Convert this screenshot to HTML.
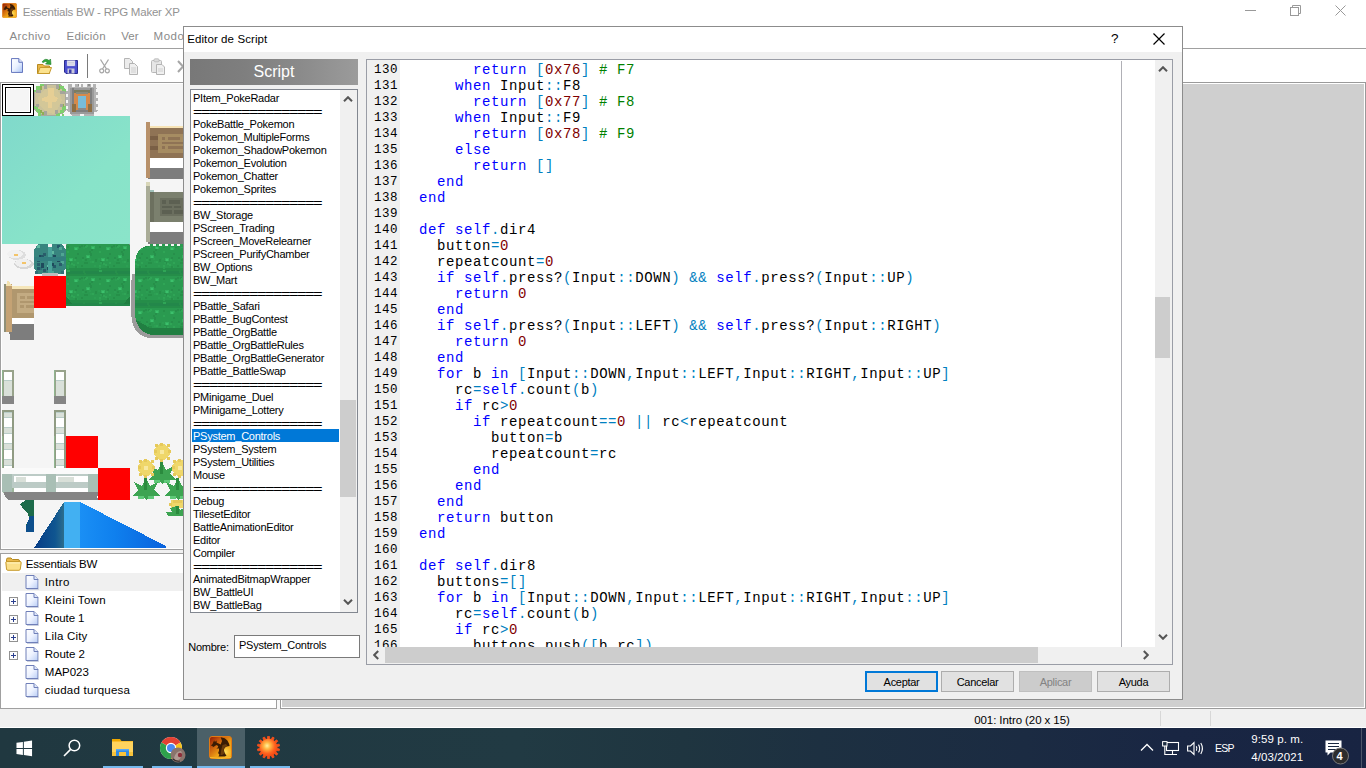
<!DOCTYPE html>
<html lang="es"><head><meta charset="utf-8"><title>Essentials BW - RPG Maker XP</title>
<style>
*{margin:0;padding:0;box-sizing:border-box}
html,body{width:1366px;height:768px;overflow:hidden;background:#fff}
body{position:relative;font-family:"Liberation Sans",sans-serif;font-size:12px;color:#000}
.a{position:absolute}
.t{position:absolute;white-space:pre;line-height:1}
#dlg{position:absolute;left:183px;top:26px;width:1000px;height:674px;background:#f0f0f0;border:1px solid #8c8c8c}
#dtitle{position:absolute;left:0;top:0;width:998px;height:25px;background:#fff}
.li{position:absolute;left:2px;white-space:pre;font-size:11px;line-height:13px;height:13px;letter-spacing:-0.25px;margin-top:1px}
.sep{font-size:10px;letter-spacing:-0.98px;transform:scaleX(1.646);transform-origin:0 0;margin-top:1.5px}
.ln{position:absolute;left:7px;font-family:"Liberation Mono",monospace;font-size:12.5px;letter-spacing:0.5px;line-height:16px;height:16px;white-space:pre;color:#000}
.cl{position:absolute;left:34px;font-family:"Liberation Mono",monospace;font-size:14px;letter-spacing:0.6px;line-height:16px;height:16px;white-space:pre;color:#000}
.k{color:#0000ff}.s{color:#0080c0}.n{color:#800000}.c{color:#008000}
.btn{position:absolute;top:645px;width:73px;height:21px;background:#e1e1e1;border:1px solid #adadad;font-size:11px;text-align:center;line-height:21px;letter-spacing:-0.3px}
.tr{position:absolute;white-space:pre;font-size:12px;line-height:18px;height:18px}
</style></head>
<body>
<div class="a" id="main" style="left:0;top:0;width:1366px;height:728px;background:#fff">
<div class="t" id="f1" style="left:22.8px;top:4.02px;font-size:11.5px;line-height:16px;color:#939393;letter-spacing:-0.22px;">Essentials BW - RPG Maker XP</div>
<div class="t" id="f2" style="left:9.5px;top:28.02px;font-size:11.5px;line-height:16px;color:#8a8a8a;letter-spacing:0.38px;">Archivo</div>
<div class="t" id="f3" style="left:66.5px;top:28.02px;font-size:11.5px;line-height:16px;color:#8a8a8a;letter-spacing:0.23px;">Edición</div>
<div class="t" id="f4" style="left:121.2px;top:28.02px;font-size:11.5px;line-height:16px;color:#8a8a8a;letter-spacing:0.01px;">Ver</div>
<div class="t" id="f5" style="left:153.5px;top:28.02px;font-size:11.5px;line-height:16px;color:#8a8a8a;letter-spacing:0.55px;">Modo</div>
<div class="a" style="left:0;top:48px;width:1366px;height:1px;background:#a0a0a0"></div>
<div class="a" style="left:0;top:82px;width:1366px;height:1px;background:#a0a0a0"></div>
<svg class="a" style="left:2px;top:3px" width="15" height="15" viewBox="0 0 23 23"><defs><linearGradient id="rmb" x1="0" y1="0" x2="1" y2="1"><stop offset="0" stop-color="#8c1606"/><stop offset="0.3" stop-color="#c85a0c"/><stop offset="0.6" stop-color="#eea016"/><stop offset="1" stop-color="#f5b422"/></linearGradient><radialGradient id="rfb" cx="0.72" cy="0.7" r="0.3"><stop offset="0" stop-color="#ffe060"/><stop offset="1" stop-color="#ffd040" stop-opacity="0"/></radialGradient></defs><rect x="0.5" y="0.5" width="22" height="22" rx="2.5" fill="url(#rmb)" stroke="#e07a14"/><rect x="0.5" y="0.5" width="22" height="22" rx="2.5" fill="url(#rfb)"/><path d="M1.8 9.5L3.5 8L5.1 4.2L5.9 6L7.5 4.4L7.7 6.8L9.6 7.5L11.7 8.6L13 5.1L11.7 1.3L15.7 2.2L18.4 4.6L20.1 7.7L20.6 10L17.5 10.4L15.7 11.7L14.8 13.9L15.7 17L17.5 19.7L15.7 20.6H9.5L10.4 18.8L9.1 17L10 14.8V12.6L7.3 12.4L8.8 11.4L9.2 10L7.2 8.9L6 9.9L3.8 11.3L3.6 9.9Z" fill="#3a1c04"/><path d="M13.5 9L17 8L18.5 10L15.5 11.5L14.5 14L15.5 17.5L13 19H11.5L12 15Z" fill="#6a3c0c"/><path d="M1 21.5Q11.5 23.5 22 21.5" stroke="#f7c030" stroke-width="1" fill="none"/></svg>
<div class="a" style="left:1245px;top:10px;width:11px;height:1px;background:#999"></div>
<svg class="a" style="left:1290px;top:5px" width="11" height="11" viewBox="0 0 11 11"><path d="M2.5 2.5V0.5H10.5V8.5H8.5" fill="none" stroke="#999"/><rect x="0.5" y="2.5" width="8" height="8" fill="none" stroke="#999"/></svg>
<svg class="a" style="left:1335px;top:5px" width="11" height="11" viewBox="0 0 11 11"><path d="M0.5 0.5L10.5 10.5M10.5 0.5L0.5 10.5" stroke="#999" stroke-width="1" fill="none"/></svg>
<svg class="a" style="left:11px;top:58px" width="12" height="15" viewBox="0 0 13 16"><defs><linearGradient id="ni" x1="0" y1="0" x2="1" y2="1"><stop offset="0" stop-color="#fff"/><stop offset="0.5" stop-color="#eaf1ff"/><stop offset="1" stop-color="#a9c4f5"/></linearGradient></defs><path d="M0.5 0.5H8.5L12.5 4.5V15.5H0.5Z" fill="url(#ni)" stroke="#5a6cb8"/><path d="M8.5 0.5V4.5H12.5" fill="#dfe8fb" stroke="#5a6cb8"/></svg>
<svg class="a" style="left:37px;top:57px" width="16" height="18" viewBox="0 0 16 18"><path d="M0.5 7.5H6L7.5 9H12.5V16.5H0.5Z" fill="#e8b648" stroke="#b88a20"/><path d="M0.8 16.5L3 10.5H14.5L12.3 16.5Z" fill="#fbe28e" stroke="#c79a2c"/><path d="M5 5Q8 0.5 12 3.5L13.5 2L14 7.5L8.5 7L10.3 5.2Q8 3.5 6.5 5.5Z" fill="#2fa83a" stroke="#1c7a26" stroke-width="0.6"/></svg>
<svg class="a" style="left:64px;top:60px" width="14" height="14" viewBox="0 0 14 14"><path d="M0.5 0.5H13.5V13.5H2L0.5 12Z" fill="#4a4ed0" stroke="#2a2c90"/><rect x="3" y="0.5" width="8" height="5.5" fill="#f4f4fa" stroke="#8a8cc8" stroke-width="0.5"/><path d="M4 2.2H10M4 4H10" stroke="#b0b0c8" stroke-width="0.8"/><rect x="3.5" y="8.5" width="7" height="5" fill="#c8c8dc"/><rect x="5" y="9.5" width="2.5" height="3.5" fill="#3a3ca8"/></svg>
<div class="a" style="left:87px;top:54px;width:1px;height:24px;background:#7a7a7a"></div>
<svg class="a" style="left:99px;top:59px" width="11" height="15" viewBox="0 0 11 15"><path d="M1.5 0.5L7.5 10M9.5 0.5L3.5 10" stroke="#a6a6a6" stroke-width="1.3" fill="none"/><circle cx="2.7" cy="11.8" r="2" fill="none" stroke="#a6a6a6" stroke-width="1.2"/><circle cx="8.3" cy="11.8" r="2" fill="none" stroke="#a6a6a6" stroke-width="1.2"/></svg>
<svg class="a" style="left:124px;top:58px" width="15" height="17" viewBox="0 0 15 17"><path d="M0.5 0.5H5.5L8.5 3.5V10.5H0.5Z" fill="#ececec" stroke="#b4b4b4"/><path d="M5.5 5.5H10.5L13.5 8.5V16.5H5.5Z" fill="#efefef" stroke="#b4b4b4"/><path d="M7 10H12M7 12H12M7 14H12" stroke="#c8c8c8" stroke-width="0.8"/></svg>
<svg class="a" style="left:151px;top:58px" width="15" height="17" viewBox="0 0 15 17"><rect x="0.5" y="2.5" width="10" height="12" rx="1" fill="#e6e6e6" stroke="#b8b8b8"/><rect x="3" y="0.8" width="5" height="3" rx="1" fill="#dcdcdc" stroke="#b8b8b8" stroke-width="0.8"/><path d="M5.5 6.5H11L13.5 9V16.5H5.5Z" fill="#f0f0f0" stroke="#b4b4b4"/><path d="M7 11H12M7 13H12" stroke="#c8c8c8" stroke-width="0.8"/></svg>
<svg class="a" style="left:177px;top:60px" width="12" height="13" viewBox="0 0 12 13"><path d="M1 1L11 12M11 1L1 12" stroke="#a6a6a6" stroke-width="2" fill="none"/></svg>
<div class="a" style="left:0;top:83px;width:282px;height:626px;background:#f0f0f0"></div>
<div class="a" id="tiles" style="left:0;top:82px;width:277px;height:468px;background:#f5f5f5;border:1px solid #a0a0a0;box-shadow:inset 1px 1px 0 #fff,inset -1px -1px 0 #fff;overflow:hidden"><div class="a" style="left:1px;top:1px"><svg class="a" style="left:0;top:0" width="274" height="464" viewBox="0 0 274 464" shape-rendering="crispEdges"><rect x="0" y="0" width="32" height="32" fill="#000"/><rect x="1" y="1" width="30" height="30" fill="#fff"/><rect x="3" y="3" width="26" height="26" fill="#000"/><rect x="4" y="4" width="24" height="24" fill="#fff"/><rect x="5" y="5" width="22" height="22" fill="#f5f5f5"/><polygon points="38,0 58,0 64,6 64,26 58,32 38,32 32,26 32,6" fill="#a9a99e"/><polygon points="40,1 56,1 63,8 63,24 56,31 40,31 33,24 33,8" fill="#cbc29b"/><polygon points="44,4 54,4 58,10 60,16 56,24 52,30 44,28 38,22 36,14 40,8" fill="#d3c798"/><polygon points="46,4 52,4 52,12 56,14 54,18 50,18 50,24 46,24 46,18 40,17 40,14 46,12" fill="#e6cf95"/><rect x="38" y="0" width="4" height="2" fill="#7fcf6e"/><rect x="34" y="2" width="4" height="4" fill="#7fcf6e"/><rect x="36" y="0" width="2" height="2" fill="#7fcf6e"/><rect x="56" y="0" width="2" height="2" fill="#7fcf6e"/><rect x="58" y="2" width="4" height="3" fill="#7fcf6e"/><rect x="60" y="5" width="4" height="3" fill="#7fcf6e"/><rect x="32" y="6" width="2" height="2" fill="#7fcf6e"/><rect x="32" y="22" width="4" height="3" fill="#7fcf6e"/><rect x="34" y="25" width="4" height="3" fill="#7fcf6e"/><rect x="36" y="28" width="3" height="4" fill="#7fcf6e"/><rect x="60" y="22" width="4" height="4" fill="#7fcf6e"/><rect x="58" y="26" width="4" height="3" fill="#7fcf6e"/><rect x="54" y="29" width="5" height="3" fill="#7fcf6e"/><rect x="60" y="30" width="2" height="2" fill="#7fcf6e"/><rect x="38" y="2" width="2" height="4" fill="#8fae55"/><rect x="56" y="2" width="2" height="4" fill="#8fae55"/><rect x="40" y="28" width="2" height="3" fill="#8fae55"/><rect x="60" y="20" width="2" height="3" fill="#8fae55"/><rect x="38" y="26" width="2" height="3" fill="#8fae55"/><rect x="42" y="0" width="3" height="5" fill="#a5a59b"/><rect x="54" y="0" width="3" height="5" fill="#a5a59b"/><rect x="34" y="6" width="5" height="3" fill="#a5a59b"/><rect x="58" y="7" width="5" height="3" fill="#a5a59b"/><rect x="34" y="20" width="3" height="3" fill="#a5a59b"/><rect x="58" y="20" width="3" height="3" fill="#a5a59b"/><rect x="42" y="27" width="3" height="4" fill="#a5a59b"/><rect x="53" y="26" width="3" height="4" fill="#a5a59b"/><rect x="32" y="0" width="6" height="2" fill="#f5f5f5"/><rect x="32" y="0" width="2" height="6" fill="#f5f5f5"/><rect x="60" y="0" width="4" height="2" fill="#f5f5f5"/><rect x="32" y="28" width="3" height="4" fill="#f5f5f5"/><rect x="58" y="30" width="2" height="2" fill="#f5f5f5"/><polygon points="66,0 94,0 96,6 96,26 92,32 70,32 64,26 64,6" fill="#b3b3b3"/><rect x="71" y="0" width="2" height="3" fill="#f5f5f5"/><rect x="76" y="0" width="2" height="2" fill="#8e8e8e"/><rect x="81" y="0" width="2" height="3" fill="#f5f5f5"/><rect x="86" y="0" width="2" height="2" fill="#8e8e8e"/><rect x="70" y="0" width="2" height="3" fill="#f5f5f5"/><rect x="77" y="0" width="2" height="3" fill="#f5f5f5"/><rect x="83" y="0" width="2" height="3" fill="#f5f5f5"/><rect x="89" y="0" width="2" height="3" fill="#f5f5f5"/><rect x="64" y="4" width="2" height="3" fill="#f5f5f5"/><rect x="94" y="5" width="2" height="3" fill="#f5f5f5"/><rect x="64" y="10" width="2" height="3" fill="#f5f5f5"/><rect x="94" y="11" width="2" height="3" fill="#f5f5f5"/><rect x="64" y="16" width="2" height="3" fill="#f5f5f5"/><rect x="94" y="17" width="2" height="3" fill="#f5f5f5"/><rect x="64" y="22" width="2" height="3" fill="#f5f5f5"/><rect x="94" y="23" width="2" height="3" fill="#f5f5f5"/><rect x="64" y="0" width="2" height="4" fill="#f5f5f5"/><rect x="94" y="0" width="2" height="4" fill="#f5f5f5"/><rect x="64" y="28" width="4" height="4" fill="#f5f5f5"/><rect x="92" y="28" width="4" height="4" fill="#f5f5f5"/><rect x="78" y="30" width="4" height="2" fill="#f5f5f5"/><rect x="68" y="4" width="24" height="26" fill="#9a9a9a"/><rect x="70" y="4" width="2" height="24" fill="#7f7f7f"/><rect x="88" y="4" width="2" height="24" fill="#7f7f7f"/><rect x="72" y="8" width="16" height="20" fill="#d58a4b"/><rect x="72" y="6" width="16" height="3" fill="#7c7c62"/><rect x="74" y="8" width="12" height="2" fill="#8a8a7a"/><rect x="70" y="20" width="4" height="8" fill="#8c6f45"/><rect x="86" y="20" width="4" height="8" fill="#8c6f45"/><rect x="76" y="12" width="8" height="12" fill="#78bcd8"/><rect x="76" y="24" width="8" height="3" fill="#8a8a8a"/><rect x="74" y="26" width="12" height="2" fill="#7f7f7f"/><defs><linearGradient id="wg" x1="0" y1="0" x2="1" y2="1"><stop offset="0" stop-color="#80d9cb"/><stop offset="0.6" stop-color="#88e3c9"/><stop offset="1" stop-color="#8ae4c9"/></linearGradient></defs><rect x="0" y="32" width="128" height="128" fill="url(#wg)"/><rect x="148" y="74" width="33" height="10" fill="#ffffff"/><rect x="148" y="138" width="33" height="10" fill="#ffffff"/><rect x="10" y="234" width="22" height="6" fill="#ffffff"/><rect x="146" y="84" width="35" height="11" fill="#7d7d7d"/><rect x="144" y="38" width="4" height="56" fill="#b8916a"/><rect x="148" y="42" width="33" height="2" fill="#f7e3b5"/><rect x="148" y="44" width="33" height="30" fill="#8f7355"/><rect x="148" y="52" width="8" height="4" fill="#7a5f45"/><rect x="148" y="62" width="8" height="4" fill="#7a5f45"/><rect x="156" y="50" width="25" height="19" fill="#a68c62"/><rect x="160" y="53" width="3" height="3" fill="#8f7355"/><rect x="166" y="53" width="12" height="3" fill="#8f7355"/><rect x="160" y="58" width="21" height="2" fill="#8f7355"/><rect x="160" y="62" width="3" height="3" fill="#8f7355"/><rect x="166" y="62" width="15" height="3" fill="#8f7355"/><rect x="146" y="148" width="35" height="12" fill="#7d7d7d"/><rect x="144" y="98" width="4" height="60" fill="#a9ac97"/><rect x="144" y="98" width="4" height="4" fill="#d8d6b8"/><rect x="148" y="106" width="4" height="2" fill="#9fc0b8"/><rect x="148" y="108" width="33" height="30" fill="#7b806e"/><rect x="148" y="108" width="4" height="30" fill="#6c705f"/><rect x="158" y="114" width="23" height="18" fill="#6b6f5f"/><rect x="160" y="116" width="4" height="4" fill="#5c6052"/><rect x="167" y="116" width="11" height="4" fill="#5c6052"/><rect x="160" y="122" width="10" height="2" fill="#5c6052"/><rect x="172" y="122" width="7" height="2" fill="#5c6052"/><rect x="160" y="126" width="10" height="4" fill="#5c6052"/><rect x="172" y="126" width="9" height="4" fill="#5c6052"/><ellipse cx="15" cy="171" rx="9" ry="5" fill="#dedede"/><ellipse cx="13" cy="170" rx="8" ry="4" fill="#f1f1f1"/><ellipse cx="22" cy="180" rx="10" ry="5" fill="#d6d6d6"/><ellipse cx="21" cy="179" rx="8" ry="4" fill="#efefef"/><rect x="12" y="170" width="4" height="2" fill="#f3c46a"/><rect x="20" y="178" width="4" height="2" fill="#f3c46a"/><polygon points="36,160 60,160 64,166 64,184 60,190 36,190 32,184 32,166" fill="#38857f"/><rect x="39" y="179" width="3" height="3" fill="#1f4a5c"/><rect x="37" y="171" width="3" height="3" fill="#1f4a5c"/><rect x="47" y="181" width="3" height="3" fill="#1f4a5c"/><rect x="35" y="179" width="3" height="3" fill="#2a5d6b"/><rect x="59" y="175" width="3" height="3" fill="#2f7078"/><rect x="49" y="167" width="3" height="3" fill="#5fb8a0"/><rect x="55" y="175" width="3" height="3" fill="#1f4a5c"/><rect x="59" y="177" width="3" height="3" fill="#4fa593"/><rect x="45" y="181" width="3" height="3" fill="#5fb8a0"/><rect x="39" y="181" width="3" height="3" fill="#5fb8a0"/><rect x="59" y="177" width="3" height="3" fill="#4fa593"/><rect x="55" y="161" width="3" height="3" fill="#245868"/><rect x="57" y="163" width="3" height="3" fill="#5fb8a0"/><rect x="57" y="179" width="3" height="3" fill="#2a5d6b"/><rect x="41" y="185" width="3" height="3" fill="#2a5d6b"/><rect x="59" y="187" width="3" height="3" fill="#2f7078"/><rect x="47" y="179" width="3" height="3" fill="#245868"/><rect x="45" y="183" width="3" height="3" fill="#4fa593"/><rect x="45" y="183" width="3" height="3" fill="#1f4a5c"/><rect x="47" y="165" width="3" height="3" fill="#2f7078"/><rect x="35" y="161" width="3" height="3" fill="#5fb8a0"/><rect x="47" y="167" width="3" height="3" fill="#2f7078"/><rect x="53" y="173" width="3" height="3" fill="#245868"/><rect x="59" y="169" width="3" height="3" fill="#4fa593"/><rect x="49" y="187" width="3" height="3" fill="#4fa593"/><rect x="51" y="171" width="3" height="3" fill="#1f4a5c"/><rect x="51" y="173" width="3" height="3" fill="#1f4a5c"/><rect x="39" y="171" width="3" height="3" fill="#245868"/><rect x="33" y="187" width="3" height="3" fill="#2f7078"/><rect x="51" y="181" width="3" height="3" fill="#245868"/><rect x="37" y="183" width="3" height="3" fill="#2f7078"/><rect x="49" y="179" width="3" height="3" fill="#1f4a5c"/><rect x="35" y="183" width="3" height="3" fill="#245868"/><rect x="39" y="181" width="3" height="3" fill="#1f4a5c"/><rect x="41" y="169" width="3" height="3" fill="#2a5d6b"/><rect x="35" y="175" width="3" height="3" fill="#245868"/><rect x="47" y="163" width="3" height="3" fill="#2f7078"/><rect x="57" y="163" width="3" height="3" fill="#4fa593"/><rect x="46" y="160" width="4" height="30" fill="#4aa39a"/><rect x="32" y="173" width="32" height="4" fill="#337f80"/><rect x="40" y="189" width="16" height="3" fill="#bdbdbd"/><rect x="46" y="160" width="4" height="3" fill="#f5f5f5"/><rect x="32" y="192" width="32" height="32" fill="#ff0000"/><rect x="64" y="352" width="32" height="32" fill="#ff0000"/><rect x="96" y="384" width="32" height="32" fill="#ff0000"/><defs><pattern id="bp" x="64" y="160" width="32" height="32" patternUnits="userSpaceOnUse"><rect width="32" height="32" fill="#2a9a50"/><rect y="24" width="32" height="8" fill="#258d49"/><rect y="27" width="32" height="3" fill="#23874a"/><rect x="10" y="4" width="2" height="2" fill="#269049"/><rect x="20" y="1" width="2" height="2" fill="#2fa556"/><rect x="26" y="17" width="2" height="2" fill="#2fa556"/><rect x="11" y="18" width="2" height="2" fill="#2fa556"/><rect x="29" y="16" width="2" height="2" fill="#278f4b"/><rect x="1" y="2" width="2" height="2" fill="#269049"/><rect x="13" y="2" width="2" height="2" fill="#278f4b"/><rect x="2" y="17" width="2" height="2" fill="#269049"/><rect x="1" y="26" width="2" height="2" fill="#2fa556"/><rect x="7" y="20" width="2" height="2" fill="#2fa556"/><rect x="18" y="18" width="2" height="2" fill="#269049"/><rect x="1" y="7" width="2" height="2" fill="#2fa556"/><rect x="17" y="27" width="2" height="2" fill="#278f4b"/><rect x="9" y="13" width="2" height="2" fill="#278f4b"/><rect x="17" y="3" width="2" height="2" fill="#2c9f53"/><rect x="17" y="26" width="2" height="2" fill="#278f4b"/><rect x="3" y="18" width="2" height="2" fill="#278f4b"/><rect x="11" y="3" width="2" height="2" fill="#2fa556"/><rect x="18" y="1" width="2" height="2" fill="#278f4b"/><rect x="15" y="21" width="2" height="2" fill="#269049"/><rect x="24" y="10" width="2" height="2" fill="#269049"/><rect x="18" y="29" width="2" height="2" fill="#269049"/><rect x="11" y="9" width="2" height="2" fill="#278f4b"/><rect x="25" y="5" width="2" height="2" fill="#278f4b"/><rect x="2" y="18" width="2" height="2" fill="#2c9f53"/><rect x="16" y="15" width="2" height="2" fill="#2c9f53"/><rect x="23" y="14" width="2" height="2" fill="#2c9f53"/><rect x="19" y="2" width="2" height="2" fill="#2fa556"/><rect x="16" y="13" width="2" height="2" fill="#278f4b"/><rect x="24" y="10" width="2" height="2" fill="#278f4b"/><rect x="29" y="15" width="2" height="2" fill="#269049"/><rect x="1" y="21" width="2" height="2" fill="#2fa556"/><rect x="24" y="17" width="2" height="2" fill="#2c9f53"/><rect x="10" y="22" width="2" height="2" fill="#2c9f53"/><rect x="19" y="15" width="2" height="2" fill="#269049"/><rect x="2" y="26" width="2" height="2" fill="#2fa556"/><rect x="8" y="15" width="2" height="2" fill="#2fa556"/><rect x="1" y="23" width="2" height="2" fill="#2c9f53"/><rect x="20" y="18" width="2" height="2" fill="#269049"/><rect x="9" y="22" width="2" height="2" fill="#269049"/><rect x="28" y="21" width="2" height="2" fill="#2c9f53"/><rect x="0" y="14" width="2" height="2" fill="#2c9f53"/><rect x="5" y="19" width="2" height="2" fill="#2fa556"/><rect x="15" y="1" width="2" height="2" fill="#278f4b"/><rect x="24" y="9" width="2" height="2" fill="#278f4b"/><rect x="23" y="7" width="2" height="2" fill="#269049"/><rect x="8" y="3" width="4" height="3" fill="#33b05f"/><rect x="9" y="4" width="2" height="2" fill="#3cc06c"/><rect x="3" y="14" width="4" height="3" fill="#33b05f"/><rect x="4" y="15" width="2" height="2" fill="#3cc06c"/><rect x="20" y="11" width="4" height="3" fill="#33b05f"/><rect x="21" y="12" width="2" height="2" fill="#3cc06c"/><rect x="25" y="2" width="4" height="3" fill="#33b05f"/><rect x="26" y="3" width="2" height="2" fill="#3cc06c"/></pattern></defs><rect x="64" y="160" width="64" height="62" fill="url(#bp)"/><polygon points="64,212 72,222 64,222" fill="#1f7d40"/><polygon points="128,212 120,222 128,222" fill="#1f7d40"/><rect x="64" y="220" width="64" height="2" fill="#23874a"/><rect x="64" y="160" width="1" height="1" fill="#888"/><rect x="127" y="160" width="1" height="1" fill="#888"/><path d="M130 190Q127 216 130 238Q135 254 150 254H182V190Z" fill="#9b9b9b"/><path d="M144 162H182V251H150Q136 249 133 232V178Q134 165 144 162Z" fill="url(#bp)"/><path d="M134 236Q137 249 150 251H182V244H148Z" fill="#217f42"/><rect x="148" y="160" width="3" height="3" fill="#2a9a50"/><rect x="154" y="160" width="3" height="3" fill="#2a9a50"/><rect x="160" y="160" width="3" height="3" fill="#2a9a50"/><rect x="166" y="160" width="3" height="3" fill="#2a9a50"/><rect x="172" y="160" width="3" height="3" fill="#2a9a50"/><rect x="178" y="160" width="3" height="3" fill="#2a9a50"/><rect x="8" y="240" width="24" height="16" fill="#7d7d7d"/><polygon points="6,246 10,256 16,256 6,240" fill="#7d7d7d"/><rect x="2" y="200" width="8" height="48" fill="#c4a274"/><rect x="2" y="200" width="2" height="48" fill="#8e8f78"/><polygon points="6,196 10,202 4,202" fill="#f3e2b0"/><rect x="10" y="202" width="22" height="3" fill="#f5e6ba"/><rect x="10" y="205" width="22" height="29" fill="#b0976e"/><rect x="15" y="209" width="17" height="20" fill="#c3ab82"/><rect x="18" y="212" width="5" height="3" fill="#b0976e"/><rect x="25" y="212" width="7" height="3" fill="#b0976e"/><rect x="18" y="217" width="14" height="2" fill="#b0976e"/><rect x="18" y="221" width="4" height="3" fill="#b0976e"/><rect x="24" y="221" width="8" height="3" fill="#b0976e"/><rect x="0" y="286" width="12" height="34" fill="#98a38b"/><rect x="2" y="288" width="8" height="9" fill="#ffffff"/><rect x="2" y="297" width="8" height="15" fill="#d9e0d9"/><rect x="2" y="296" width="8" height="1" fill="#b9cdc8"/><rect x="0" y="312" width="12" height="8" fill="#858585"/><rect x="0" y="286" width="1" height="26" fill="#8fb58f"/><rect x="52" y="286" width="12" height="34" fill="#98a38b"/><rect x="54" y="288" width="8" height="9" fill="#ffffff"/><rect x="54" y="297" width="8" height="15" fill="#d9e0d9"/><rect x="54" y="296" width="8" height="1" fill="#b9cdc8"/><rect x="52" y="312" width="12" height="8" fill="#858585"/><rect x="52" y="286" width="1" height="26" fill="#8fb58f"/><rect x="0" y="326" width="12" height="60" fill="#909b83"/><rect x="0" y="352" width="1" height="34" fill="#8fb58f"/><rect x="2" y="328" width="8" height="58" fill="#ffffff"/><rect x="2" y="328" width="8" height="6" fill="#d9e0d9"/><rect x="2" y="333" width="8" height="1" fill="#b9cdc8"/><rect x="2" y="328" width="8" height="1" fill="#b9cdc8"/><rect x="2" y="344" width="8" height="6" fill="#d9e0d9"/><rect x="2" y="349" width="8" height="1" fill="#b9cdc8"/><rect x="2" y="343" width="8" height="1" fill="#b9cdc8"/><rect x="2" y="360" width="8" height="6" fill="#d9e0d9"/><rect x="2" y="365" width="8" height="1" fill="#b9cdc8"/><rect x="2" y="359" width="8" height="1" fill="#b9cdc8"/><rect x="2" y="376" width="8" height="6" fill="#d9e0d9"/><rect x="2" y="381" width="8" height="1" fill="#b9cdc8"/><rect x="2" y="375" width="8" height="1" fill="#b9cdc8"/><rect x="52" y="326" width="12" height="60" fill="#909b83"/><rect x="52" y="352" width="1" height="34" fill="#8fb58f"/><rect x="54" y="328" width="8" height="58" fill="#ffffff"/><rect x="54" y="328" width="8" height="6" fill="#d9e0d9"/><rect x="54" y="333" width="8" height="1" fill="#b9cdc8"/><rect x="54" y="328" width="8" height="1" fill="#b9cdc8"/><rect x="54" y="344" width="8" height="6" fill="#d9e0d9"/><rect x="54" y="349" width="8" height="1" fill="#b9cdc8"/><rect x="54" y="343" width="8" height="1" fill="#b9cdc8"/><rect x="54" y="360" width="8" height="6" fill="#d9e0d9"/><rect x="54" y="365" width="8" height="1" fill="#b9cdc8"/><rect x="54" y="359" width="8" height="1" fill="#b9cdc8"/><rect x="54" y="376" width="8" height="6" fill="#d9e0d9"/><rect x="54" y="381" width="8" height="1" fill="#b9cdc8"/><rect x="54" y="375" width="8" height="1" fill="#b9cdc8"/><rect x="0" y="384" width="96" height="7" fill="#fafafa"/><rect x="1" y="390" width="95" height="18" fill="#bccbc6"/><rect x="1" y="404" width="95" height="5" fill="#9db69b"/><rect x="2" y="408" width="94" height="8" fill="#858585"/><polygon points="0,408 6,416 0,416" fill="#f5f5f5"/><rect x="12" y="392" width="32" height="6" fill="#ffffff"/><rect x="14" y="393" width="10" height="5" fill="#d9e0d9"/><rect x="54" y="392" width="32" height="6" fill="#ffffff"/><rect x="56" y="393" width="16" height="5" fill="#d9e0d9"/><rect x="12" y="404" width="32" height="4" fill="#ffffff"/><rect x="54" y="404" width="32" height="4" fill="#ffffff"/><rect x="0" y="390" width="10" height="18" fill="#a9bfb5"/><rect x="44" y="390" width="10" height="18" fill="#a9bfb5"/><rect x="86" y="390" width="10" height="18" fill="#a9bfb5"/><rect x="95" y="412" width="1" height="2" fill="#fff"/><polygon points="24,416 32,416 32,448 24,448 24,440 28,436 26,430 22,426 18,420" fill="#1d6b4a"/><polygon points="28,432 32,432 32,448 24,448 24,442" fill="#0d4f8c"/><defs><linearGradient id="rl" x1="0" y1="0" x2="1" y2="0"><stop offset="0" stop-color="#073c86"/><stop offset="0.7" stop-color="#0f5590"/><stop offset="1" stop-color="#2c6d8c"/></linearGradient><linearGradient id="rr" x1="0" y1="0" x2="1" y2="0"><stop offset="0" stop-color="#1a8ff5"/><stop offset="0.4" stop-color="#0f80ee"/><stop offset="1" stop-color="#0a62dc"/></linearGradient></defs><polygon points="62,418 62,464 32,464" fill="url(#rl)"/><rect x="62" y="418" width="16" height="46" fill="#42b0f2"/><polygon points="78,418 82,420 164,462 164,464 78,464" fill="url(#rr)"/><polygon points="160,378 164,386 172,382 168,390 174,396 164,396 160,400 156,396 146,396 152,390 148,382 156,386" fill="#3da452"/><rect x="158" y="378" width="3" height="12" fill="#2b8a3e"/><rect x="152" y="396" width="6" height="3" fill="#5fc978"/><rect x="162" y="396" width="6" height="3" fill="#5fc978"/><polygon points="144,394 148,402 156,398 152,406 158,412 148,412 144,416 140,412 130,412 136,406 132,398 140,402" fill="#3da452"/><rect x="142" y="394" width="3" height="12" fill="#2b8a3e"/><rect x="136" y="412" width="6" height="3" fill="#5fc978"/><rect x="146" y="412" width="6" height="3" fill="#5fc978"/><polygon points="176,394 180,402 188,398 184,406 190,412 180,412 176,416 172,412 162,412 168,406 164,398 172,402" fill="#3da452"/><rect x="174" y="394" width="3" height="12" fill="#2b8a3e"/><rect x="168" y="412" width="6" height="3" fill="#5fc978"/><rect x="178" y="412" width="6" height="3" fill="#5fc978"/><circle cx="160" cy="368" r="8" fill="#efd76a"/><rect x="152" y="366" width="3" height="3" fill="#e6c95a"/><rect x="166" y="366" width="3" height="3" fill="#e6c95a"/><rect x="158" y="359" width="3" height="3" fill="#e6c95a"/><rect x="158" y="375" width="3" height="3" fill="#e6c95a"/><rect x="153" y="360" width="3" height="3" fill="#e6c95a"/><rect x="165" y="360" width="3" height="3" fill="#e6c95a"/><rect x="153" y="373" width="3" height="3" fill="#e6c95a"/><rect x="165" y="373" width="3" height="3" fill="#e6c95a"/><rect x="158" y="366" width="4" height="4" fill="#f8e9a0"/><circle cx="144" cy="384" r="8" fill="#efd76a"/><rect x="136" y="382" width="3" height="3" fill="#e6c95a"/><rect x="150" y="382" width="3" height="3" fill="#e6c95a"/><rect x="142" y="375" width="3" height="3" fill="#e6c95a"/><rect x="142" y="391" width="3" height="3" fill="#e6c95a"/><rect x="137" y="376" width="3" height="3" fill="#e6c95a"/><rect x="149" y="376" width="3" height="3" fill="#e6c95a"/><rect x="137" y="389" width="3" height="3" fill="#e6c95a"/><rect x="149" y="389" width="3" height="3" fill="#e6c95a"/><rect x="142" y="382" width="4" height="4" fill="#f8e9a0"/><circle cx="178" cy="384" r="8" fill="#efd76a"/><rect x="170" y="382" width="3" height="3" fill="#e6c95a"/><rect x="184" y="382" width="3" height="3" fill="#e6c95a"/><rect x="176" y="375" width="3" height="3" fill="#e6c95a"/><rect x="176" y="391" width="3" height="3" fill="#e6c95a"/><rect x="171" y="376" width="3" height="3" fill="#e6c95a"/><rect x="183" y="376" width="3" height="3" fill="#e6c95a"/><rect x="171" y="389" width="3" height="3" fill="#e6c95a"/><rect x="183" y="389" width="3" height="3" fill="#e6c95a"/><rect x="176" y="382" width="4" height="4" fill="#f8e9a0"/><rect x="169" y="416" width="13" height="8" fill="#efd76a"/><rect x="171" y="416" width="9" height="3" fill="#e6c95a"/><rect x="167" y="419" width="3" height="3" fill="#e6c95a"/><polygon points="174,422 178,426 182,424 182,432 166,432 164,428 170,428 168,424" fill="#3da452"/><rect x="174" y="422" width="3" height="8" fill="#2b8a3e"/></svg></div></div>
<div class="a" id="tree" style="left:0;top:553px;width:277px;height:156px;background:#fff;border:1px solid #a0a0a0;overflow:hidden"><div class="a" style="left:1px;top:0">
<svg class="a" style="left:3px;top:3px" width="17" height="14" viewBox="0 0 17 14"><path d="M1.5 2.5Q1.5 1 3 1H6L7.5 2.5H13Q14.5 2.5 14.5 4V5H1.5Z" fill="#e9b84a" stroke="#b58a22" stroke-width="1"/><path d="M0.8 5.2Q1 4.5 2 4.5H15Q16.3 4.5 16.2 5.8L15.3 12Q15.1 13.3 14 13.3H2.8Q1.6 13.3 1.5 12Z" fill="#fbe08a" stroke="#c79a2c" stroke-width="1"/><path d="M2 6H15" stroke="#fff3c0" stroke-width="1"/></svg>
<div class="t" id="f6" style="left:23.8px;top:2.02px;font-size:11.5px;line-height:16px;color:#000;letter-spacing:-0.21px;">Essentials BW</div>
<div class="a" style="left:0;top:19px;width:181px;height:18px;background:#f0f0f0"></div>
<svg class="a" style="left:23px;top:21px" width="14" height="15" viewBox="0 0 14 15"><defs><linearGradient id="pg0" x1="0" y1="0" x2="1" y2="1"><stop offset="0" stop-color="#ffffff"/><stop offset="0.5" stop-color="#eef3ff"/><stop offset="1" stop-color="#b9cdf5"/></linearGradient></defs><path d="M1 0.5H9L13 4.5V13.5H1Z" fill="url(#pg0)" stroke="#6f7fb8" stroke-width="1"/><path d="M9 0.5V4.5H13" fill="#dfe8fb" stroke="#6f7fb8" stroke-width="1"/><path d="M2 14.5H13.5V5" stroke="#c9cfe0" stroke-width="1" fill="none"/></svg>
<div class="t" id="f7" style="left:42.8px;top:20.02px;font-size:11.5px;line-height:16px;color:#000;letter-spacing:0.38px;">Intro</div>
<svg class="a" style="left:23px;top:39px" width="14" height="15" viewBox="0 0 14 15"><defs><linearGradient id="pg1" x1="0" y1="0" x2="1" y2="1"><stop offset="0" stop-color="#ffffff"/><stop offset="0.5" stop-color="#eef3ff"/><stop offset="1" stop-color="#b9cdf5"/></linearGradient></defs><path d="M1 0.5H9L13 4.5V13.5H1Z" fill="url(#pg1)" stroke="#6f7fb8" stroke-width="1"/><path d="M9 0.5V4.5H13" fill="#dfe8fb" stroke="#6f7fb8" stroke-width="1"/><path d="M2 14.5H13.5V5" stroke="#c9cfe0" stroke-width="1" fill="none"/></svg>
<svg class="a" style="left:7px;top:43px" width="9" height="9" viewBox="0 0 9 9"><rect x="0.5" y="0.5" width="8" height="8" fill="#fdfdfd" stroke="#919191"/><path d="M2 4.5H7M4.5 2V7" stroke="#2b3f8f" stroke-width="1"/></svg>
<div class="t" id="f8" style="left:42.8px;top:38.02px;font-size:11.5px;line-height:16px;color:#000;letter-spacing:0.28px;">Kleini Town</div>
<svg class="a" style="left:23px;top:57px" width="14" height="15" viewBox="0 0 14 15"><defs><linearGradient id="pg2" x1="0" y1="0" x2="1" y2="1"><stop offset="0" stop-color="#ffffff"/><stop offset="0.5" stop-color="#eef3ff"/><stop offset="1" stop-color="#b9cdf5"/></linearGradient></defs><path d="M1 0.5H9L13 4.5V13.5H1Z" fill="url(#pg2)" stroke="#6f7fb8" stroke-width="1"/><path d="M9 0.5V4.5H13" fill="#dfe8fb" stroke="#6f7fb8" stroke-width="1"/><path d="M2 14.5H13.5V5" stroke="#c9cfe0" stroke-width="1" fill="none"/></svg>
<svg class="a" style="left:7px;top:61px" width="9" height="9" viewBox="0 0 9 9"><rect x="0.5" y="0.5" width="8" height="8" fill="#fdfdfd" stroke="#919191"/><path d="M2 4.5H7M4.5 2V7" stroke="#2b3f8f" stroke-width="1"/></svg>
<div class="t" id="f9" style="left:42.8px;top:56.02px;font-size:11.5px;line-height:16px;color:#000;letter-spacing:-0.11px;">Route 1</div>
<svg class="a" style="left:23px;top:75px" width="14" height="15" viewBox="0 0 14 15"><defs><linearGradient id="pg3" x1="0" y1="0" x2="1" y2="1"><stop offset="0" stop-color="#ffffff"/><stop offset="0.5" stop-color="#eef3ff"/><stop offset="1" stop-color="#b9cdf5"/></linearGradient></defs><path d="M1 0.5H9L13 4.5V13.5H1Z" fill="url(#pg3)" stroke="#6f7fb8" stroke-width="1"/><path d="M9 0.5V4.5H13" fill="#dfe8fb" stroke="#6f7fb8" stroke-width="1"/><path d="M2 14.5H13.5V5" stroke="#c9cfe0" stroke-width="1" fill="none"/></svg>
<svg class="a" style="left:7px;top:79px" width="9" height="9" viewBox="0 0 9 9"><rect x="0.5" y="0.5" width="8" height="8" fill="#fdfdfd" stroke="#919191"/><path d="M2 4.5H7M4.5 2V7" stroke="#2b3f8f" stroke-width="1"/></svg>
<div class="t" id="f10" style="left:42.8px;top:74.02px;font-size:11.5px;line-height:16px;color:#000;letter-spacing:0.20px;">Lila City</div>
<svg class="a" style="left:23px;top:93px" width="14" height="15" viewBox="0 0 14 15"><defs><linearGradient id="pg4" x1="0" y1="0" x2="1" y2="1"><stop offset="0" stop-color="#ffffff"/><stop offset="0.5" stop-color="#eef3ff"/><stop offset="1" stop-color="#b9cdf5"/></linearGradient></defs><path d="M1 0.5H9L13 4.5V13.5H1Z" fill="url(#pg4)" stroke="#6f7fb8" stroke-width="1"/><path d="M9 0.5V4.5H13" fill="#dfe8fb" stroke="#6f7fb8" stroke-width="1"/><path d="M2 14.5H13.5V5" stroke="#c9cfe0" stroke-width="1" fill="none"/></svg>
<svg class="a" style="left:7px;top:97px" width="9" height="9" viewBox="0 0 9 9"><rect x="0.5" y="0.5" width="8" height="8" fill="#fdfdfd" stroke="#919191"/><path d="M2 4.5H7M4.5 2V7" stroke="#2b3f8f" stroke-width="1"/></svg>
<div class="t" id="f11" style="left:42.8px;top:92.02px;font-size:11.5px;line-height:16px;color:#000;letter-spacing:-0.05px;">Route 2</div>
<svg class="a" style="left:23px;top:111px" width="14" height="15" viewBox="0 0 14 15"><defs><linearGradient id="pg5" x1="0" y1="0" x2="1" y2="1"><stop offset="0" stop-color="#ffffff"/><stop offset="0.5" stop-color="#eef3ff"/><stop offset="1" stop-color="#b9cdf5"/></linearGradient></defs><path d="M1 0.5H9L13 4.5V13.5H1Z" fill="url(#pg5)" stroke="#6f7fb8" stroke-width="1"/><path d="M9 0.5V4.5H13" fill="#dfe8fb" stroke="#6f7fb8" stroke-width="1"/><path d="M2 14.5H13.5V5" stroke="#c9cfe0" stroke-width="1" fill="none"/></svg>
<div class="t" id="f12" style="left:42.8px;top:110.02px;font-size:11.5px;line-height:16px;color:#000;letter-spacing:-0.00px;">MAP023</div>
<svg class="a" style="left:23px;top:129px" width="14" height="15" viewBox="0 0 14 15"><defs><linearGradient id="pg6" x1="0" y1="0" x2="1" y2="1"><stop offset="0" stop-color="#ffffff"/><stop offset="0.5" stop-color="#eef3ff"/><stop offset="1" stop-color="#b9cdf5"/></linearGradient></defs><path d="M1 0.5H9L13 4.5V13.5H1Z" fill="url(#pg6)" stroke="#6f7fb8" stroke-width="1"/><path d="M9 0.5V4.5H13" fill="#dfe8fb" stroke="#6f7fb8" stroke-width="1"/><path d="M2 14.5H13.5V5" stroke="#c9cfe0" stroke-width="1" fill="none"/></svg>
<div class="t" id="f13" style="left:42.8px;top:128.02px;font-size:11.5px;line-height:16px;color:#000;letter-spacing:0.24px;">ciudad turquesa</div>
</div></div>
<div class="a" style="left:277px;top:83px;width:3px;height:626px;background:#f8f8f8"></div>
<div class="a" id="map" style="left:280px;top:82px;width:1086px;height:627px;background:#cfcfcf;border:1px solid #9a9a9a;box-shadow:inset 1px 1px 0 #fff,inset -1px -1px 0 #fff"></div>
<div class="a" id="status" style="left:0;top:709px;width:1366px;height:19px;background:#f0f0f0;border-bottom:1px solid #fff"></div>
<div class="t" id="f14" style="left:974.2px;top:712.02px;font-size:11.5px;line-height:16px;color:#000;letter-spacing:-0.08px;">001: Intro (20 x 15)</div>
<div class="a" style="left:1160px;top:711px;width:1px;height:15px;background:#d7d7d7"></div>
<div class="a" style="left:1210px;top:711px;width:1px;height:15px;background:#d7d7d7"></div>
</div>
<div id="dlg">
<div id="dtitle"></div>
<div class="t" id="f15" style="left:3.2px;top:4.02px;font-size:11.5px;line-height:16px;color:#000;letter-spacing:0.10px;">Editor de Script</div>
<div class="t" style="left:927px;top:5px;font-size:13.5px;line-height:14px" id="qm">?</div>
<svg class="a" style="left:969px;top:6px" width="12" height="12" viewBox="0 0 12 12"><path d="M0.5 0.5L11.5 11.5M11.5 0.5L0.5 11.5" stroke="#000" stroke-width="1.2" fill="none"/></svg>
<div class="a" style="left:6px;top:32px;width:168px;height:26px;background:linear-gradient(90deg,#787878 0%,#7e7e7e 30%,#8a8a8a 65%,#9b9b9b 100%);color:#fff;text-align:center;font-size:16px;line-height:25px" id="sh">Script</div>
<div class="a" id="lb" style="left:6px;top:62px;width:168px;height:524px;background:#fff;border:1px solid #828790;overflow:hidden">
<div class="li" style="top:1px">PItem_PokeRadar</div>
<div class="li sep" style="top:14px">================</div>
<div class="li" style="top:27px">PokeBattle_Pokemon</div>
<div class="li" style="top:40px">Pokemon_MultipleForms</div>
<div class="li" style="top:53px">Pokemon_ShadowPokemon</div>
<div class="li" style="top:66px">Pokemon_Evolution</div>
<div class="li" style="top:79px">Pokemon_Chatter</div>
<div class="li" style="top:92px">Pokemon_Sprites</div>
<div class="li sep" style="top:105px">================</div>
<div class="li" style="top:118px">BW_Storage</div>
<div class="li" style="top:131px">PScreen_Trading</div>
<div class="li" style="top:144px">PScreen_MoveRelearner</div>
<div class="li" style="top:157px">PScreen_PurifyChamber</div>
<div class="li" style="top:170px">BW_Options</div>
<div class="li" style="top:183px">BW_Mart</div>
<div class="li sep" style="top:196px">================</div>
<div class="li" style="top:209px">PBattle_Safari</div>
<div class="li" style="top:222px">PBattle_BugContest</div>
<div class="li" style="top:235px">PBattle_OrgBattle</div>
<div class="li" style="top:248px">PBattle_OrgBattleRules</div>
<div class="li" style="top:261px">PBattle_OrgBattleGenerator</div>
<div class="li" style="top:274px">PBattle_BattleSwap</div>
<div class="li sep" style="top:287px">================</div>
<div class="li" style="top:300px">PMinigame_Duel</div>
<div class="li" style="top:313px">PMinigame_Lottery</div>
<div class="li sep" style="top:326px">================</div>
<div class="a" style="left:1px;top:339px;width:147px;height:13px;background:#0078d7"></div>
<div class="li" style="top:339px;color:#fff">PSystem_Controls</div>
<div class="li" style="top:352px">PSystem_System</div>
<div class="li" style="top:365px">PSystem_Utilities</div>
<div class="li" style="top:378px">Mouse</div>
<div class="li sep" style="top:391px">================</div>
<div class="li" style="top:404px">Debug</div>
<div class="li" style="top:417px">TilesetEditor</div>
<div class="li" style="top:430px">BattleAnimationEditor</div>
<div class="li" style="top:443px">Editor</div>
<div class="li" style="top:456px">Compiler</div>
<div class="li sep" style="top:469px">================</div>
<div class="li" style="top:482px">AnimatedBitmapWrapper</div>
<div class="li" style="top:495px">BW_BattleUI</div>
<div class="li" style="top:508px">BW_BattleBag</div>
<div class="a" style="left:149px;top:0;width:17px;height:522px;background:#f0f0f0"></div>
<div class="a" style="left:149px;top:310px;width:16px;height:97px;background:#cdcdcd"></div>
<svg class="a" style="left:152px;top:6px" width="10" height="6" viewBox="0 0 10 6"><path d="M1 5.2L5 1.2L9 5.2" stroke="#555" stroke-width="2" fill="none"/></svg>
<svg class="a" style="left:152px;top:509px" width="10" height="6" viewBox="0 0 10 6"><path d="M1 0.8L5 4.8L9 0.8" stroke="#555" stroke-width="2" fill="none"/></svg>
</div>
<div class="t" id="f16" style="left:4.2px;top:612.19px;font-size:11px;line-height:16px;color:#000;letter-spacing:-0.23px;">Nombre:</div>
<div class="a" style="left:50px;top:608px;width:126px;height:23px;background:#fff;border:1px solid #7a7a7a"></div>
<div class="t" id="f17" style="left:55.0px;top:610.19px;font-size:11px;line-height:16px;color:#000;letter-spacing:-0.24px;">PSystem_Controls</div>
<div class="a" id="ed" style="left:182px;top:32px;width:807px;height:606px;background:#fff;border:1px solid #9a9da6;overflow:hidden">
<div class="a" style="left:0;top:0;width:33px;height:587px;background:#f0f0f0"></div>
<div class="a" style="left:754px;top:1px;width:1px;height:586px;background:#b0b0b6"></div>
<div class="ln" style="top:2.4px">130</div>
<div class="cl" style="top:2.4px">        <span class="k">return</span> <span class="s">[</span><span class="n">0x76</span><span class="s">]</span> <span class="c"># F7</span></div>
<div class="ln" style="top:18.4px">131</div>
<div class="cl" style="top:18.4px">      <span class="k">when</span> Input<span class="s">::</span>F8</div>
<div class="ln" style="top:34.4px">132</div>
<div class="cl" style="top:34.4px">        <span class="k">return</span> <span class="s">[</span><span class="n">0x77</span><span class="s">]</span> <span class="c"># F8</span></div>
<div class="ln" style="top:50.4px">133</div>
<div class="cl" style="top:50.4px">      <span class="k">when</span> Input<span class="s">::</span>F9</div>
<div class="ln" style="top:66.4px">134</div>
<div class="cl" style="top:66.4px">        <span class="k">return</span> <span class="s">[</span><span class="n">0x78</span><span class="s">]</span> <span class="c"># F9</span></div>
<div class="ln" style="top:82.4px">135</div>
<div class="cl" style="top:82.4px">      <span class="k">else</span></div>
<div class="ln" style="top:98.4px">136</div>
<div class="cl" style="top:98.4px">        <span class="k">return</span> <span class="s">[</span><span class="s">]</span></div>
<div class="ln" style="top:114.4px">137</div>
<div class="cl" style="top:114.4px">    <span class="k">end</span></div>
<div class="ln" style="top:130.4px">138</div>
<div class="cl" style="top:130.4px">  <span class="k">end</span></div>
<div class="ln" style="top:146.4px">139</div>
<div class="ln" style="top:162.4px">140</div>
<div class="cl" style="top:162.4px">  <span class="k">def</span> <span class="k">self</span><span class="s">.</span>dir4</div>
<div class="ln" style="top:178.4px">141</div>
<div class="cl" style="top:178.4px">    button<span class="s">=</span><span class="n">0</span></div>
<div class="ln" style="top:194.4px">142</div>
<div class="cl" style="top:194.4px">    repeatcount<span class="s">=</span><span class="n">0</span></div>
<div class="ln" style="top:210.4px">143</div>
<div class="cl" style="top:210.4px">    <span class="k">if</span> <span class="k">self</span><span class="s">.</span>press?<span class="s">(</span>Input<span class="s">::</span>DOWN<span class="s">)</span> <span class="s">&amp;&amp;</span> <span class="k">self</span><span class="s">.</span>press?<span class="s">(</span>Input<span class="s">::</span>UP<span class="s">)</span></div>
<div class="ln" style="top:226.4px">144</div>
<div class="cl" style="top:226.4px">      <span class="k">return</span> <span class="n">0</span></div>
<div class="ln" style="top:242.4px">145</div>
<div class="cl" style="top:242.4px">    <span class="k">end</span></div>
<div class="ln" style="top:258.4px">146</div>
<div class="cl" style="top:258.4px">    <span class="k">if</span> <span class="k">self</span><span class="s">.</span>press?<span class="s">(</span>Input<span class="s">::</span>LEFT<span class="s">)</span> <span class="s">&amp;&amp;</span> <span class="k">self</span><span class="s">.</span>press?<span class="s">(</span>Input<span class="s">::</span>RIGHT<span class="s">)</span></div>
<div class="ln" style="top:274.4px">147</div>
<div class="cl" style="top:274.4px">      <span class="k">return</span> <span class="n">0</span></div>
<div class="ln" style="top:290.4px">148</div>
<div class="cl" style="top:290.4px">    <span class="k">end</span></div>
<div class="ln" style="top:306.4px">149</div>
<div class="cl" style="top:306.4px">    <span class="k">for</span> b <span class="k">in</span> <span class="s">[</span>Input<span class="s">::</span>DOWN<span class="s">,</span>Input<span class="s">::</span>LEFT<span class="s">,</span>Input<span class="s">::</span>RIGHT<span class="s">,</span>Input<span class="s">::</span>UP<span class="s">]</span></div>
<div class="ln" style="top:322.4px">150</div>
<div class="cl" style="top:322.4px">      rc<span class="s">=</span><span class="k">self</span><span class="s">.</span>count<span class="s">(</span>b<span class="s">)</span></div>
<div class="ln" style="top:338.4px">151</div>
<div class="cl" style="top:338.4px">      <span class="k">if</span> rc<span class="s">&gt;</span><span class="n">0</span></div>
<div class="ln" style="top:354.4px">152</div>
<div class="cl" style="top:354.4px">        <span class="k">if</span> repeatcount<span class="s">==</span><span class="n">0</span> <span class="s">||</span> rc<span class="s">&lt;</span>repeatcount</div>
<div class="ln" style="top:370.4px">153</div>
<div class="cl" style="top:370.4px">          button<span class="s">=</span>b</div>
<div class="ln" style="top:386.4px">154</div>
<div class="cl" style="top:386.4px">          repeatcount<span class="s">=</span>rc</div>
<div class="ln" style="top:402.4px">155</div>
<div class="cl" style="top:402.4px">        <span class="k">end</span></div>
<div class="ln" style="top:418.4px">156</div>
<div class="cl" style="top:418.4px">      <span class="k">end</span></div>
<div class="ln" style="top:434.4px">157</div>
<div class="cl" style="top:434.4px">    <span class="k">end</span></div>
<div class="ln" style="top:450.4px">158</div>
<div class="cl" style="top:450.4px">    <span class="k">return</span> button</div>
<div class="ln" style="top:466.4px">159</div>
<div class="cl" style="top:466.4px">  <span class="k">end</span></div>
<div class="ln" style="top:482.4px">160</div>
<div class="ln" style="top:498.4px">161</div>
<div class="cl" style="top:498.4px">  <span class="k">def</span> <span class="k">self</span><span class="s">.</span>dir8</div>
<div class="ln" style="top:514.4px">162</div>
<div class="cl" style="top:514.4px">    buttons<span class="s">=</span><span class="s">[</span><span class="s">]</span></div>
<div class="ln" style="top:530.4px">163</div>
<div class="cl" style="top:530.4px">    <span class="k">for</span> b <span class="k">in</span> <span class="s">[</span>Input<span class="s">::</span>DOWN<span class="s">,</span>Input<span class="s">::</span>LEFT<span class="s">,</span>Input<span class="s">::</span>RIGHT<span class="s">,</span>Input<span class="s">::</span>UP<span class="s">]</span></div>
<div class="ln" style="top:546.4px">164</div>
<div class="cl" style="top:546.4px">      rc<span class="s">=</span><span class="k">self</span><span class="s">.</span>count<span class="s">(</span>b<span class="s">)</span></div>
<div class="ln" style="top:562.4px">165</div>
<div class="cl" style="top:562.4px">      <span class="k">if</span> rc<span class="s">&gt;</span><span class="n">0</span></div>
<div class="ln" style="top:578.4px">166</div>
<div class="cl" style="top:578.4px">        buttons<span class="s">.</span>push<span class="s">(</span><span class="s">[</span>b<span class="s">,</span>rc<span class="s">]</span><span class="s">)</span></div>
<div class="a" style="left:788px;top:0;width:18px;height:604px;background:#f0f0f0"></div>
<div class="a" style="left:0;top:587px;width:805px;height:18px;background:#f0f0f0"></div>
<div class="a" style="left:788px;top:237px;width:15px;height:61px;background:#cdcdcd"></div>
<div class="a" style="left:18px;top:587px;width:653px;height:16px;background:#cdcdcd"></div>
<svg class="a" style="left:791px;top:6px" width="10" height="6" viewBox="0 0 10 6"><path d="M1 5.2L5 1.2L9 5.2" stroke="#555" stroke-width="2" fill="none"/></svg>
<svg class="a" style="left:791px;top:574px" width="10" height="6" viewBox="0 0 10 6"><path d="M1 0.8L5 4.8L9 0.8" stroke="#555" stroke-width="2" fill="none"/></svg>
<svg class="a" style="left:6px;top:590px" width="6" height="10" viewBox="0 0 6 10"><path d="M5.2 1L1.2 5L5.2 9" stroke="#555" stroke-width="2" fill="none"/></svg>
<svg class="a" style="left:776px;top:590px" width="6" height="10" viewBox="0 0 6 10"><path d="M0.8 1L4.8 5L0.8 9" stroke="#555" stroke-width="2" fill="none"/></svg>
</div>
<div class="btn" style="left:681px;top:644px;border:2px solid #0078d7;line-height:19px">Aceptar</div>
<div class="btn" style="left:757px;top:644px">Cancelar</div>
<div class="btn" style="left:835px;top:644px;background:#cccccc;border-color:#bfbfbf;color:#838383">Aplicar</div>
<div class="btn" style="left:913px;top:644px">Ayuda</div>
</div>
<div class="a" id="tb" style="left:0;top:728px;width:1366px;height:40px;background:linear-gradient(90deg,#203840 0%,#213a43 38%,#1f3540 50%,#1d3041 60%,#1b2b42 75%,#192643 86%,#182442 100%);overflow:hidden">
<div class="a" style="left:197px;top:0;width:48px;height:40px;background:#4b6068"></div>
<div class="a" style="left:103px;top:38px;width:40px;height:2px;background:#76b9ed"></div>
<div class="a" style="left:152px;top:38px;width:40px;height:2px;background:#76b9ed"></div>
<div class="a" style="left:197px;top:38px;width:48px;height:2px;background:#76b9ed"></div>
<div class="a" style="left:250px;top:38px;width:40px;height:2px;background:#76b9ed"></div>
<svg class="a" style="left:15.5px;top:11.5px" width="17" height="17" viewBox="0 0 18 18"><path d="M0.5 3L7.3 2V8.4H0.5ZM8.3 1.8L17 0.5V8.4H8.3ZM0.5 9.4H7.3V15.8L0.5 14.8ZM8.3 9.4H17V17.3L8.3 16Z" fill="#fff"/></svg>
<svg class="a" style="left:62px;top:10px" width="20" height="20" viewBox="0 0 20 20"><circle cx="12.4" cy="7.5" r="5.3" fill="none" stroke="#fff" stroke-width="1.5"/><path d="M8.6 11.4L2 18" stroke="#fff" stroke-width="1.6"/></svg>
<svg class="a" style="left:111px;top:10px" width="23" height="20" viewBox="0 0 23 20"><path d="M1 1H9L10.5 3H22V8H1Z" fill="#f0a800"/><rect x="1" y="3.5" width="21" height="14.5" fill="#ffd45e"/><path d="M1 14H22V18H1Z" fill="#f7c33a"/><path d="M5 18V11H18V18H15V14H8V18Z" fill="#2f8be6"/><rect x="5" y="11" width="13" height="1.5" fill="#5aa9f2"/></svg>
<svg class="a" style="left:159px;top:8px" width="28" height="28" viewBox="0 0 28 28"><circle cx="12" cy="12" r="11" fill="#fff"/><path d="M12 12L2.47 6.5A11 11 0 0 1 21.53 6.5Z" fill="#e34133"/><path d="M12 12L21.53 6.5A11 11 0 0 1 12 23Z" fill="#f6c21c"/><path d="M12 12L12 23A11 11 0 0 1 2.47 6.5Z" fill="#2ea24c"/><path d="M12 6.5H21.53" stroke="#e34133" stroke-width="0"/><circle cx="12" cy="12" r="5.2" fill="#fff"/><circle cx="12" cy="12" r="4" fill="#4a8af4"/><circle cx="19" cy="19" r="7.5" fill="#8a746c"/><path d="M15 22Q17 15 22 15Q24 18 22 21Q20 25 16 24Z" fill="#b09a92"/><circle cx="21" cy="19" r="2.2" fill="#8c2f3a"/><path d="M14 23Q17 26 21 25" stroke="#3a2e2a" stroke-width="1.2" fill="none"/></svg>
<svg class="a" style="left:209px;top:8px" width="23" height="23" viewBox="0 0 23 23"><defs><linearGradient id="rma" x1="0" y1="0" x2="1" y2="1"><stop offset="0" stop-color="#8c1606"/><stop offset="0.3" stop-color="#c85a0c"/><stop offset="0.6" stop-color="#eea016"/><stop offset="1" stop-color="#f5b422"/></linearGradient><radialGradient id="rfa" cx="0.72" cy="0.7" r="0.3"><stop offset="0" stop-color="#ffe060"/><stop offset="1" stop-color="#ffd040" stop-opacity="0"/></radialGradient></defs><rect x="0.5" y="0.5" width="22" height="22" rx="2.5" fill="url(#rma)" stroke="#e07a14"/><rect x="0.5" y="0.5" width="22" height="22" rx="2.5" fill="url(#rfa)"/><path d="M1.8 9.5L3.5 8L5.1 4.2L5.9 6L7.5 4.4L7.7 6.8L9.6 7.5L11.7 8.6L13 5.1L11.7 1.3L15.7 2.2L18.4 4.6L20.1 7.7L20.6 10L17.5 10.4L15.7 11.7L14.8 13.9L15.7 17L17.5 19.7L15.7 20.6H9.5L10.4 18.8L9.1 17L10 14.8V12.6L7.3 12.4L8.8 11.4L9.2 10L7.2 8.9L6 9.9L3.8 11.3L3.6 9.9Z" fill="#3a1c04"/><path d="M13.5 9L17 8L18.5 10L15.5 11.5L14.5 14L15.5 17.5L13 19H11.5L12 15Z" fill="#6a3c0c"/><path d="M1 21.5Q11.5 23.5 22 21.5" stroke="#f7c030" stroke-width="1" fill="none"/></svg>
<svg class="a" style="left:257px;top:8px" width="23" height="23" viewBox="0 0 23 23"><defs><radialGradient id="sg" cx="0.42" cy="0.4" r="0.62"><stop offset="0" stop-color="#fff2a0"/><stop offset="0.3" stop-color="#ffb844"/><stop offset="0.7" stop-color="#ff6420"/><stop offset="1" stop-color="#f24812"/></radialGradient></defs><polygon points="10.37,3.18 10.60,0.34 12.40,0.34 12.63,3.18 14.10,3.51 15.53,1.05 17.16,1.83 16.13,4.49 17.30,5.43 19.66,3.83 20.79,5.25 18.71,7.19 19.36,8.55 22.18,8.13 22.58,9.90 19.87,10.75 19.87,12.25 22.58,13.10 22.18,14.87 19.36,14.45 18.71,15.81 20.79,17.75 19.66,19.17 17.30,17.57 16.13,18.51 17.16,21.17 15.53,21.95 14.10,19.49 12.63,19.82 12.40,22.66 10.60,22.66 10.37,19.82 8.90,19.49 7.47,21.95 5.84,21.17 6.87,18.51 5.70,17.57 3.34,19.17 2.21,17.75 4.29,15.81 3.64,14.45 0.82,14.87 0.42,13.10 3.13,12.25 3.13,10.75 0.42,9.90 0.82,8.13 3.64,8.55 4.29,7.19 2.21,5.25 3.34,3.83 5.70,5.43 6.87,4.49 5.84,1.83 7.47,1.05 8.90,3.51" fill="#f5501a" stroke="#f5501a" stroke-width="0.8" stroke-linejoin="round"/><circle cx="11.5" cy="11.5" r="8.8" fill="url(#sg)"/></svg>
<svg class="a" style="left:1140px;top:15px" width="14" height="9" viewBox="0 0 14 9"><path d="M1 7.5L7 1.5L13 7.5" stroke="#fff" stroke-width="1.3" fill="none"/></svg>
<svg class="a" style="left:1162px;top:13px" width="18" height="15" viewBox="0 0 18 15"><rect x="4.5" y="1.5" width="12" height="8" fill="none" stroke="#fff" stroke-width="1.1"/><path d="M10.5 9.5V13M6 13.5H15" stroke="#fff" stroke-width="1.1"/><rect x="0.6" y="0.6" width="4.4" height="4.4" fill="#1b2c42" stroke="#fff" stroke-width="1"/><path d="M2.8 5V13.5H6" stroke="#fff" stroke-width="1.1" fill="none"/></svg>
<svg class="a" style="left:1187px;top:13px" width="18" height="15" viewBox="0 0 18 15"><path d="M0.6 5H3.5L7 1.5V13.5L3.5 10H0.6Z" fill="none" stroke="#fff" stroke-width="1.1"/><path d="M9.3 5.3Q10.6 7.5 9.3 9.7M11.5 3.6Q13.8 7.5 11.5 11.4M13.8 2Q17 7.5 13.8 13" stroke="#fff" stroke-width="1.1" fill="none"/></svg>
<div class="t" id="f18" style="left:1215.0px;top:12.36px;font-size:10.5px;line-height:16px;color:#fff;letter-spacing:-0.74px;">ESP</div>
<div class="t" id="f19" style="left:1251.3px;top:3.02px;font-size:11.5px;line-height:16px;color:#fff;letter-spacing:0.08px;">9:59 p. m.</div>
<div class="t" id="f20" style="left:1251.3px;top:20.52px;font-size:11.5px;line-height:16px;color:#fff;letter-spacing:0.08px;">4/03/2021</div>
<svg class="a" style="left:1325px;top:12px" width="26" height="26" viewBox="0 0 26 26"><path d="M0.5 0.5H16.5V12.5H5.5L2.5 15.5V12.5H0.5Z" fill="#fff"/><path d="M3 3.5H14M3 6.5H14M3 9.5H14" stroke="#1a2840" stroke-width="1"/><circle cx="15.5" cy="16" r="8" fill="#2d2d2d" stroke="#7a7a7a" stroke-width="1"/></svg>
<div class="t" style="left:1336.5px;top:22px;font-size:11px;font-weight:bold;color:#fff;line-height:12px">4</div>
<div class="a" style="left:1361px;top:0;width:1px;height:40px;background:#4a5568"></div>
</div>
</body></html>
